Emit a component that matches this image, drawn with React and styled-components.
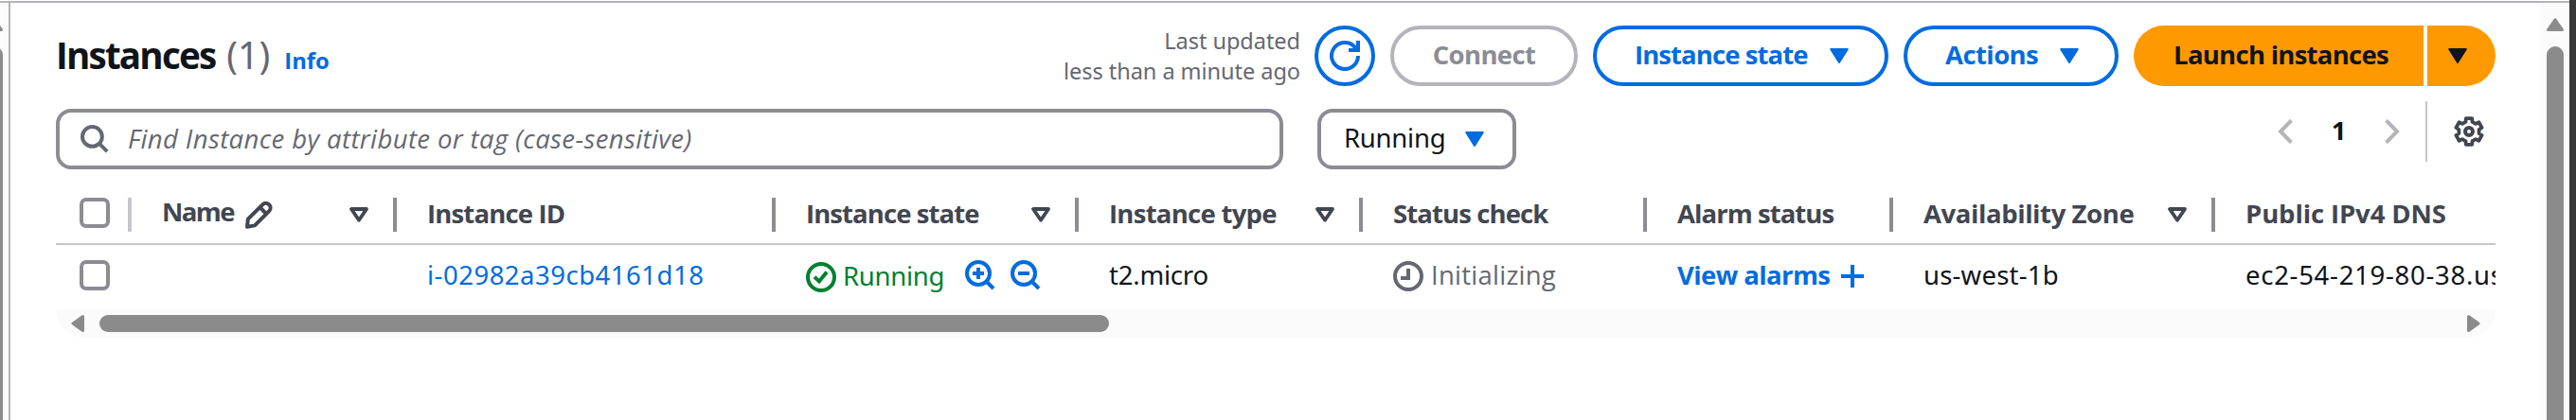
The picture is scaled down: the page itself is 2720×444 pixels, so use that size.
import React from 'react';
import styled, { createGlobalStyle, css } from 'styled-components';

const sans = '"Noto Sans", "Open Sans", sans-serif';
const humanist = '"Open Sans", "Noto Sans", sans-serif';

const color = {
  text: '#0f141a',
  heading: '#424650',
  muted: '#656871',
  disabled: '#8c8c94',
  faint: '#b4b4bb',
  rule: '#c6c6cd',
  link: '#006ce0',
  success: '#00802f',
  primary: '#ff9900',
  track: '#fbfbfb',
  thumb: '#8b8b8b',
};

const GlobalStyle = createGlobalStyle`
  *, *::before, *::after { box-sizing: border-box; }
  body { margin: 0; background: #fff; overflow: hidden; }
  svg { display: block; flex: none; }
`;

/* ---------- window frame ---------- */

const Window = styled.div`
  display: flex;
  width: 2720px;
  height: 444px;
  background: #fff;
  color: ${color.text};
  font-family: ${sans};
  font-size: 27.5px;
  line-height: 40px;
  white-space: nowrap;
  overflow: hidden;
`;

const Viewport = styled.div`
  flex: 1;
  min-width: 0;
  display: flex;
  margin-top: 1px;
  border-top: 2px solid ${color.faint};
`;

const WindowEdge = styled.div`
  width: 7px;
  background: #383838;
`;

const NavRail = styled.div`
  flex: none;
  width: 11px;
  border-right: 2px solid ${color.faint};
  background: ${color.track};
  overflow: hidden;
  display: flex;
  flex-direction: column;
  padding-top: 16px;
`;

const PageRail = styled.div`
  flex: none;
  width: 30px;
  background: ${color.track};
  display: flex;
  flex-direction: column;
  align-items: center;
  padding-top: 16px;
`;

const VerticalThumb = styled.div`
  flex: none;
  width: 18px;
  height: 440px;
  margin-top: 16px;
  margin-left: ${(p) => p.$shift || 0}px;
  border-radius: 9px;
  background: ${color.thumb};
`;

const NavArrow = styled.div`
  margin-left: -15px;
  width: 18px;
`;

const Main = styled.main`
  flex: 1;
  min-width: 0;
  padding: 24px 48px 0;
`;

/* ---------- header ---------- */

const Header = styled.header`
  display: flex;
  align-items: center;
  height: 64px;
`;

const TitleGroup = styled.div`
  display: flex;
  align-items: baseline;
  padding-bottom: 2px;
`;

const Title = styled.h1`
  margin: 0;
  font: 700 38.6px/48px ${humanist};
  letter-spacing: -1.8px;
`;

const Count = styled.span`
  margin-left: 12px;
  font-size: 39.2px;
  line-height: 48px;
  color: ${color.muted};
`;

const InfoLink = styled.a`
  margin-left: 15px;
  font: 700 23.8px/32px ${humanist};
  color: ${color.link};
`;

const Updated = styled.div`
  margin-left: auto;
  padding-bottom: 1px;
  font-size: 23.5px;
  line-height: 32px;
  letter-spacing: -0.04px;
  text-align: right;
  color: ${color.muted};
`;

const Actions = styled.div`
  display: flex;
  gap: 16px;
  margin-left: 15px;
`;

const tones = {
  normal: css`
    border: 4px solid ${color.link};
    color: ${color.link};
  `,
  disabled: css`
    border: 4px solid ${color.faint};
    color: ${color.disabled};
  `,
  primary: css`
    border: 0;
    background: ${color.primary};
    color: ${color.text};
  `,
};

const Button = styled.button`
  display: flex;
  align-items: center;
  justify-content: ${(p) => (p.$split ? 'space-between' : 'center')};
  width: ${(p) => p.$width}px;
  height: 64px;
  padding: ${(p) => (p.$split ? '0 38px 0 40px' : '0')};
  border-radius: 32px;
  background: #fff;
  font: 700 27.5px/40px ${humanist};
  letter-spacing: ${(p) => p.$track || 0}px;
  ${(p) => tones[p.$tone || 'normal']}
`;

const ButtonLabel = styled.span`
  padding-bottom: 2px;
`;

const LaunchGroup = styled.div`
  display: flex;
  gap: 4px;

  ${Button}:first-child { border-radius: 32px 0 0 32px; padding-left: 5px; }
  ${Button}:last-child { border-radius: 0 32px 32px 0; padding-right: 8px; }
`;

/* ---------- filters ---------- */

const Filters = styled.div`
  display: flex;
  margin-top: 24px;
`;

const SearchBox = styled.div`
  display: flex;
  align-items: center;
  width: 1296px;
  height: 64px;
  padding-left: 22px;
  border: 4px solid ${color.disabled};
  border-radius: 16px;
`;

const Placeholder = styled.span`
  margin-left: 20px;
  padding-bottom: 1px;
  font: italic 400 27.5px/40px ${humanist};
  letter-spacing: 0.38px;
  color: ${color.muted};
`;

const Select = styled.div`
  display: flex;
  align-items: center;
  justify-content: space-between;
  width: 210px;
  height: 64px;
  margin-left: 36px;
  padding: 0 30px 0 24px;
  border: 4px solid ${color.disabled};
  border-radius: 16px;
  letter-spacing: -0.25px;
`;

const SelectValue = styled.span`
  padding-bottom: 2px;
`;

const Pagination = styled.nav`
  display: flex;
  align-items: center;
  height: 64px;
  margin: -8px 12px 0 auto;
`;

const PageNumber = styled.span`
  width: 97px;
  text-align: center;
  padding-bottom: 2px;
  font: 700 27.5px/40px ${humanist};
`;

const PrefsDivider = styled.div`
  width: 2px;
  height: 64px;
  margin: 0 28px 0 27px;
  background: ${color.rule};
`;

/* ---------- table ---------- */

const Table = styled.div`
  margin-top: 18px;
  overflow: hidden;
`;

const rowGrid = css`
  display: grid;
  grid-template-columns: 80px 280px 400px 320px 300px 300px 260px 340px 296px;
  align-items: center;
`;

const HeadRow = styled.div`
  ${rowGrid}
  height: 62px;
  border-bottom: 2px solid ${color.rule};
`;

const BodyRow = styled.div`
  ${rowGrid}
  height: 68px;
  padding-bottom: 4px;
`;

const HeadCell = styled.div`
  display: flex;
  align-items: center;
  height: 36px;
  padding-left: ${(p) => (p.$check ? 25 : 32)}px;
  padding-right: 26px;
  border-right: ${(p) => (p.$last ? 0 : 4)}px solid ${(p) => (p.$check ? color.rule : color.disabled)};
`;

const HeadLabel = styled.span`
  padding-bottom: ${(p) => p.$lift || 2}px;
  font: 700 27.5px/40px ${humanist};
  letter-spacing: ${(p) => p.$track || 0}px;
  color: ${color.heading};
`;

const SortSlot = styled.span`
  margin-left: auto;
`;

const EditSlot = styled.span`
  margin-left: 12px;
`;

const Checkbox = styled.span`
  flex: none;
  width: 32px;
  height: 32px;
  border: 4px solid ${color.disabled};
  border-radius: 7px;
  margin-bottom: ${(p) => p.$lift || 0}px;
`;

const Cell = styled.div`
  display: flex;
  align-items: center;
  height: 64px;
  min-width: 0;
  padding-left: ${(p) => (p.$check ? 25 : 32)}px;
  color: ${(p) => p.$color || color.text};
`;

const CellText = styled.span`
  margin-top: ${(p) => p.$drop || 0}px;
  letter-spacing: ${(p) => p.$track || 0}px;
  margin-left: ${(p) => p.$inset || 0}px;
  ${(p) => p.$strong && css`font-family: ${humanist}; font-weight: 700;`}
  ${(p) => p.$plain && css`font-family: ${humanist};`}
`;

const IconSlot = styled.span`
  margin-left: ${(p) => p.$gap || 0}px;
  margin-top: ${(p) => p.$drop || 0}px;
`;

const ScrollTrack = styled.div`
  display: flex;
  align-items: center;
  justify-content: space-between;
  height: 30px;
  padding: 0 16px;
  border-radius: 0 0 30px 30px;
  background: ${color.track};
`;

const ScrollThumb = styled.div`
  width: 1066px;
  height: 18px;
  margin: 0 auto 0 16px;
  border-radius: 9px;
  background: ${color.thumb};
`;

/* ---------- icons ---------- */

const Icon = ({ w = 32, h = w, sw = 4, children, ...rest }) => (
  <svg width={w} height={h} viewBox={`0 0 ${w} ${h}`} fill="none" stroke="currentColor" strokeWidth={sw} {...rest}>
    {children}
  </svg>
);

const Caret = ({ color: c = 'currentColor' }) => (
  <Icon w={20} h={16} sw={2} color={c} fill="currentColor" strokeLinejoin="round">
    <path d="M1.2 1h17.6L10 15z" />
  </Icon>
);

const SortIcon = () => (
  <Icon w={20} h={16} sw={3.8} color={color.heading} strokeLinejoin="round">
    <path d="M2 2h16L10 13.8z" />
  </Icon>
);

const RefreshIcon = () => (
  <Icon>
    <path d="M30 16A14 14 0 1 1 27.5 8" />
    <path d="M30 0v10H20" />
  </Icon>
);

const SearchIcon = () => (
  <Icon w={30} color={color.muted}>
    <circle cx="12.4" cy="12.4" r="10.4" />
    <path d="M19.6 19.6l8.6 8.6" />
  </Icon>
);

const Chevron = ({ next }) => (
  <Icon w={16} h={26} color={color.faint}>
    <path d={next ? 'M1.6 1.3L13 13 1.6 24.7' : 'M14.4 1.3L3 13l11.4 11.7'} />
  </Icon>
);

const gearPath = (() => {
  const pts = [];
  for (let k = 0; k < 6; k += 1) {
    const mid = -90 + 60 * k;
    [[-19, 10.8], [-13, 14.2], [13, 14.2], [19, 10.8]].forEach(([d, r]) => {
      const a = ((mid + d) * Math.PI) / 180;
      pts.push(`${(16 + r * Math.cos(a)).toFixed(2)} ${(16 + r * Math.sin(a)).toFixed(2)}`);
    });
  }
  return `M${pts.join('L')}Z`;
})();

const GearIcon = () => (
  <Icon color={color.heading} strokeLinejoin="round">
    <path d={gearPath} strokeWidth="3.8" />
    <circle cx="16" cy="16" r="4" />
  </Icon>
);

const PencilIcon = () => (
  <Icon w={29} color={color.heading} strokeLinejoin="round">
    <path d="M2 26.8l.8-8.2L18.2 3.3a4.5 4.5 0 0 1 7 6.8L10 25.4z" />
    <path d="M15.4 6.2l6.8 6.8" />
  </Icon>
);

const CheckIcon = () => (
  <Icon>
    <circle cx="16" cy="16" r="14" />
    <path d="M9 15.8l5 4.6 8-10" />
  </Icon>
);

const ClockIcon = () => (
  <Icon>
    <circle cx="16" cy="16" r="14" />
    <path d="M16 8v10H8" />
  </Icon>
);

const ZoomIcon = ({ plus }) => (
  <Icon color={color.link}>
    <circle cx="14" cy="14" r="12" />
    <path d="M22 22l8 8M8 14h12" />
    {plus && <path d="M14 8v12" />}
  </Icon>
);

const PlusIcon = () => (
  <Icon w={24}>
    <path d="M12 0v24M0 12h24" />
  </Icon>
);

const VerticalArrow = () => (
  <Icon w={18} h={14} sw={3} color={color.thumb} fill="currentColor" strokeLinejoin="round">
    <path d="M1.5 12.5L9 1.8l7.5 10.7z" />
  </Icon>
);

const SideArrow = ({ right }) => (
  <Icon w={14} h={18} sw={3} color={color.thumb} fill="currentColor" strokeLinejoin="round">
    <path d={right ? 'M1.5 1.5L12 9 1.5 16.5z' : 'M12.5 1.5L2 9l10.5 7.5z'} />
  </Icon>
);

/* ---------- page ---------- */

const columns = [
  { label: 'Name', track: -1.6, edit: true, sort: true, lift: 7 },
  { label: 'Instance ID', track: -0.84 },
  { label: 'Instance state', track: -0.92, sort: true },
  { label: 'Instance type', track: -0.73, sort: true },
  { label: 'Status check', track: -0.89 },
  { label: 'Alarm status', track: -0.94 },
  { label: 'Availability Zone', track: -0.41, sort: true },
  { label: 'Public IPv4 DNS', track: -0.12, last: true },
];

export default function App() {
  return (
    <>
      <GlobalStyle />
      <Window>
        <Viewport>
          <NavRail>
            <NavArrow><VerticalArrow /></NavArrow>
            <VerticalThumb $shift={-15} />
          </NavRail>

          <Main>
            <Header>
              <TitleGroup>
                <Title>Instances</Title>
                <Count>(1)</Count>
                <InfoLink>Info</InfoLink>
              </TitleGroup>
              <Updated>
                Last updated
                <br />
                less than a minute ago
              </Updated>
              <Actions>
                <Button $width={64} aria-label="Refresh"><RefreshIcon /></Button>
                <Button $width={198} $tone="disabled" $track={-0.65}><ButtonLabel>Connect</ButtonLabel></Button>
                <Button $width={312} $split $track={-0.92}>
                  <ButtonLabel>Instance state</ButtonLabel>
                  <Caret />
                </Button>
                <Button $width={227} $split $track={-0.57}>
                  <ButtonLabel>Actions</ButtonLabel>
                  <Caret />
                </Button>
                <LaunchGroup>
                  <Button $width={306} $tone="primary" $track={-0.73}>
                    <ButtonLabel>Launch instances</ButtonLabel>
                  </Button>
                  <Button $width={72} $tone="primary" aria-label="More launch options"><Caret /></Button>
                </LaunchGroup>
              </Actions>
            </Header>

            <Filters>
              <SearchBox>
                <SearchIcon />
                <Placeholder>Find Instance by attribute or tag (case-sensitive)</Placeholder>
              </SearchBox>
              <Select>
                <SelectValue>Running</SelectValue>
                <Caret color={color.link} />
              </Select>
              <Pagination>
                <Chevron />
                <PageNumber>1</PageNumber>
                <Chevron next />
                <PrefsDivider />
                <GearIcon />
              </Pagination>
            </Filters>

            <Table>
              <HeadRow>
                <HeadCell $check><Checkbox $lift={4} /></HeadCell>
                {columns.map((c) => (
                  <HeadCell key={c.label} $last={c.last}>
                    <HeadLabel $track={c.track} $lift={c.lift}>{c.label}</HeadLabel>
                    {c.edit && <EditSlot><PencilIcon /></EditSlot>}
                    {c.sort && <SortSlot><SortIcon /></SortSlot>}
                  </HeadCell>
                ))}
              </HeadRow>
              <BodyRow>
                <Cell $check><Checkbox /></Cell>
                <Cell />
                <Cell $color={color.link}><CellText $track={0.5}>i-02982a39cb4161d18</CellText></Cell>
                <Cell $color={color.success}>
                  <IconSlot $drop={4}><CheckIcon /></IconSlot>
                  <CellText $inset={7} $drop={2} $track={-0.3}>Running</CellText>
                  <IconSlot $gap={22}><ZoomIcon plus /></IconSlot>
                  <IconSlot $gap={16}><ZoomIcon /></IconSlot>
                </Cell>
                <Cell><CellText $track={-0.2}>t2.micro</CellText></Cell>
                <Cell $color={color.muted}>
                  <IconSlot $drop={2}><ClockIcon /></IconSlot>
                  <CellText $inset={8} $plain $track={0.25}>Initializing</CellText>
                </Cell>
                <Cell $color={color.link}>
                  <CellText $strong $track={-0.6}>View alarms</CellText>
                  <IconSlot $gap={12} $drop={2}><PlusIcon /></IconSlot>
                </Cell>
                <Cell><CellText $track={0.2}>us-west-1b</CellText></Cell>
                <Cell><CellText $track={0.72}>ec2-54-219-80-38.us</CellText></Cell>
              </BodyRow>
              <ScrollTrack>
                <SideArrow />
                <ScrollThumb />
                <SideArrow right />
              </ScrollTrack>
            </Table>
          </Main>

          <PageRail>
            <VerticalArrow />
            <VerticalThumb />
          </PageRail>
        </Viewport>
        <WindowEdge />
      </Window>
    </>
  );
}
